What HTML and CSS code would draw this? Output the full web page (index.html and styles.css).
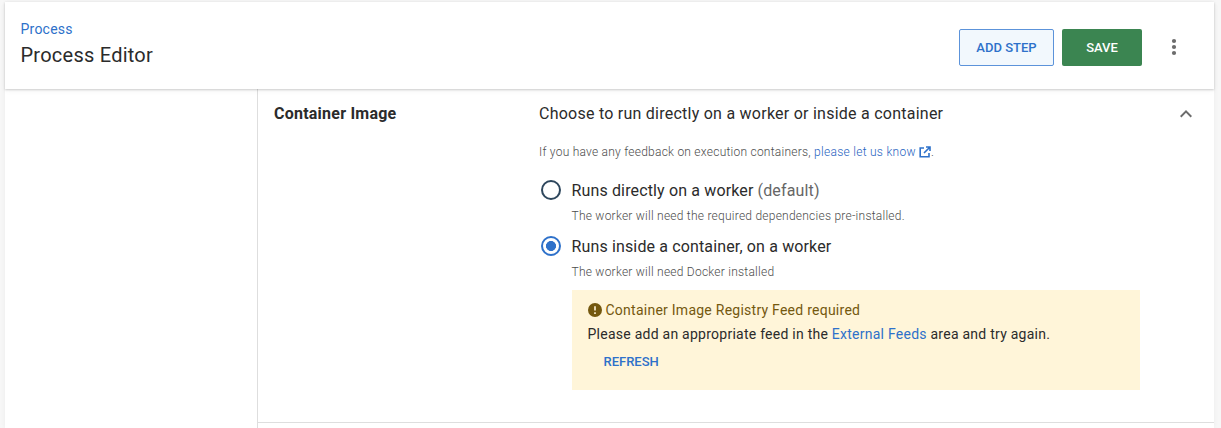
FILE: index.html
```html
<!DOCTYPE html>
<html lang="en">
<head>
<meta charset="utf-8">
<title>Process Editor</title>
<link rel="stylesheet" href="styles.css">
</head>
<body>
<main class="paper">
  <header class="header">
    <div class="titles">
      <a class="breadcrumb">Process</a>
      <h1 class="title">Process Editor</h1>
    </div>
    <div class="actions">
      <button class="btn btn-secondary">Add step</button>
      <button class="btn btn-primary">Save</button>
      <svg class="menu" viewBox="0 0 24 24"><circle cx="12" cy="6" r="2.1"/><circle cx="12" cy="12" r="2.1"/><circle cx="12" cy="18" r="2.1"/></svg>
    </div>
  </header>
  <div class="body">
    <aside class="sidebar"></aside>
    <section class="content">
      <div class="expander">
        <h2 class="section-title">Container Image</h2>
        <div class="details">
          <p class="summary">Choose to run directly on a worker or inside a container</p>
          <p class="note feedback">If you have any feedback on execution containers, <a class="link">please let us know <svg class="external" viewBox="0 0 12 12"><path d="M5 2H1.2v8.8H10V7M7 1h4v4M11 1 5 7"/></svg></a>.</p>
          <div class="option">
            <span class="radio"></span>
            <div class="option-text">
              <p class="label">Runs directly on a worker <span class="muted">(default)</span></p>
              <p class="note">The worker will need the required dependencies pre-installed.</p>
            </div>
          </div>
          <div class="option">
            <span class="radio checked"></span>
            <div class="option-text">
              <p class="label">Runs inside a container, on a worker</p>
              <p class="note">The worker will need Docker installed</p>
            </div>
          </div>
          <div class="callout">
            <p class="callout-title"><svg class="alert" viewBox="0 0 14 14"><circle cx="7" cy="7" r="7"/><path d="M7 3.2v4.3M7 9.2v1.7"/></svg><span>Container Image Registry Feed required</span></p>
            <p class="callout-text">Please add an appropriate feed in the <a class="link">External Feeds</a> area and try again.</p>
            <button class="refresh">Refresh</button>
          </div>
        </div>
        <svg class="chevron" viewBox="0 0 24 24"><path d="M12 8l-6 6 1.41 1.41L12 10.83l4.59 4.58L18 14z"/></svg>
      </div>
    </section>
  </div>
</main>
</body>
</html>
```
FILE: styles.css
```css
* { box-sizing: border-box; }
body {
  margin: 0;
  height: 428px;
  overflow: hidden;
  padding: 2px 7px 0 5px;
  background: #f7f7f7;
  color: #2b2b2b;
  font-family: Roboto, sans-serif;
}
h1, h2, p { margin: 0; }
button { border: 0; background: none; font-family: inherit; text-transform: uppercase; }
.paper {
  display: flex;
  flex-direction: column;
  height: 426px;
  background: #fff;
  box-shadow: 0 0 5px rgba(0, 0, 0, .05);
}
.header {
  position: relative;
  display: flex;
  flex: none;
  justify-content: space-between;
  height: 87px;
  padding: 0 23px 0 15.5px;
  background: #fff;
  box-shadow: 0 1px 2px rgba(0, 0, 0, .18), 0 2px 6px rgba(0, 0, 0, .04);
}
.titles { display: flex; flex-direction: column; padding-top: 17px; }
.breadcrumb { color: #2e71ca; font-size: 14px; line-height: 20px; letter-spacing: .22px; }
.title { font-size: 20px; font-weight: 400; line-height: 28px; margin-top: 2px; letter-spacing: .24px; }
.actions { display: flex; padding-top: 27px; }
.btn { height: 37px; border-radius: 2px; font-size: 13px; font-weight: 500; padding: 0 0 1px; }
.btn-secondary { width: 95px; color: #2e71ca; background: #f2f8fd; border: 1px solid #5c93da; margin-right: 8px; }
.btn-primary { width: 80px; color: #fff; background: #3b8551; }
.menu { width: 24px; height: 24px; margin: 6px 5px 0 20px; fill: #6c6c6c; }
.body { display: flex; flex: 1; }
.sidebar { width: 253px; border-right: 1px solid #dedede; }
.content { flex: 1; }
.expander {
  display: flex;
  height: 334px;
  padding: 12px 16px 0;
  border-bottom: 1px solid #dedede;
}
.section-title { width: 265px; font-size: 16px; font-weight: 700; line-height: 26px; letter-spacing: .23px; }
.details { width: 601px; }
.summary { font-size: 16px; line-height: 26px; letter-spacing: .245px; }
.note { color: #4c4c4c; font-size: 12px; font-weight: 300; line-height: 20px; letter-spacing: .24px; }
.feedback { margin: 15px 0 15px; }
.link { color: #2e71ca; }
.feedback .link { color: #1f63c0; letter-spacing: .28px; }
.external { width: 12px; height: 12px; vertical-align: -2px; fill: none; stroke: #2e71ca; stroke-width: 1.6; }
.option { display: flex; height: 56px; }
.radio { width: 20px; height: 20px; margin: 3px 10.5px 0 2px; flex: none; border: 2px solid #2e475d; border-radius: 50%; }
.checked { border-color: #2e71ca; background: radial-gradient(circle, #2e71ca 4.7px, transparent 5.3px); }
.label { font-size: 16px; line-height: 27px; margin-bottom: 2px; letter-spacing: .14px; }
.muted { color: #666; }
.callout {
  width: 568px;
  height: 100px;
  margin: 1px 0 0 32.5px;
  padding: 8px 16px;
  background: #fff5d9;
}
.callout-title { display: flex; align-items: center; gap: 4px; color: #74580f; font-size: 14px; line-height: 24px; letter-spacing: .25px; }
.alert { width: 14px; height: 14px; fill: currentColor; }
.alert path { stroke: #fff5d9; stroke-width: 1.6; }
.callout-text { font-size: 14px; line-height: 24px; letter-spacing: .25px; }
.refresh { display: block; height: 31px; padding: 0 16px; color: #2e71ca; font-size: 13px; font-weight: 500; }
.chevron { width: 24px; height: 24px; margin: 1px 0 0 34px; fill: #6c6c6c; }
```
